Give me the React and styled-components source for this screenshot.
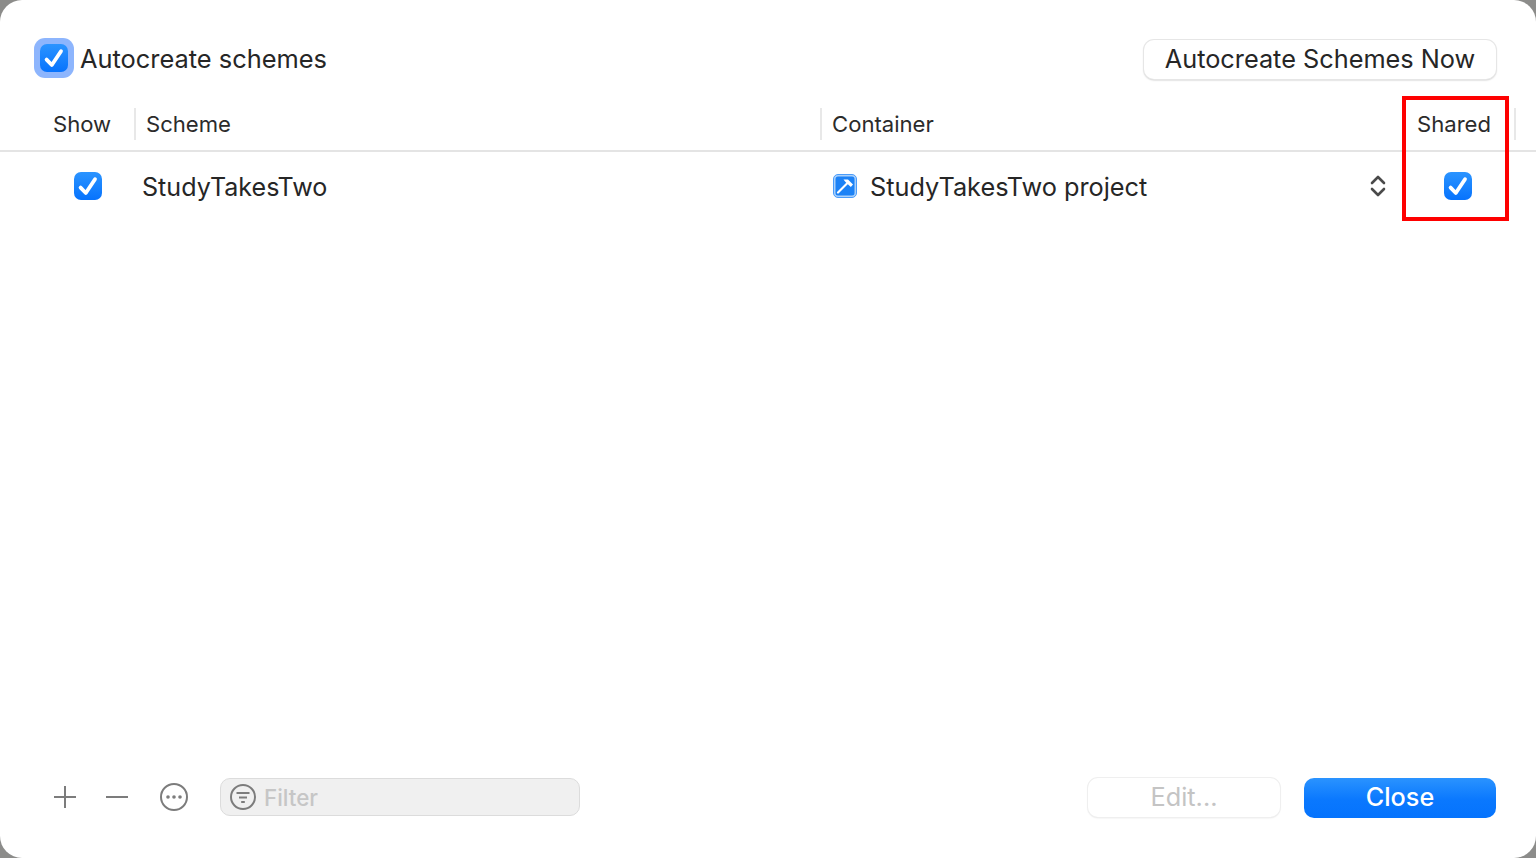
import React from "react";
import styled, { createGlobalStyle } from "styled-components";

const GlobalStyle = createGlobalStyle`
  html, body {
    margin: 0;
    height: 100%;
    background: #8c8c8a;
  }
  body {
    font-family: Inter, "Liberation Sans", sans-serif;
    overflow: hidden;
  }
`;

const Sheet = styled.div`
  position: relative;
  box-sizing: border-box;
  width: 1536px;
  height: 858px;
  display: flex;
  flex-direction: column;
  background: #ffffff;
  border-radius: 22px;
  color: #262626;
`;

const TopBar = styled.div`
  display: flex;
  align-items: flex-start;
  justify-content: space-between;
  height: 42px;
  margin-top: 38px;
  padding: 0 40px 0 34px;
`;

const FocusRing = styled.span`
  display: flex;
  align-items: center;
  justify-content: center;
  width: 40px;
  height: 40px;
  border-radius: 11px;
  background: #8db5fd;
`;

const AutoLabel = styled.label`
  display: flex;
  align-items: center;
  gap: 6px;
  font-size: 25.4px;
`;

const PushButton = styled.button`
  box-sizing: border-box;
  height: 39px;
  width: ${(p) => p.$width}px;
  margin-top: ${(p) => p.$top || 0}px;
  padding: 0 0 3px;
  border: none;
  border-radius: 10px;
  font-family: inherit;
  font-size: 25.3px;
  color: ${(p) => (p.$disabled ? "#c4c4c4" : "#262626")};
  background: #ffffff;
  box-shadow: ${(p) =>
    p.$disabled
      ? "0 0 0 1px #efefef, 0 1px 2px rgba(0,0,0,0.12)"
      : "0 0 0 1px #e6e6e6, 0 1px 2px rgba(0,0,0,0.35)"};
`;

const PrimaryButton = styled.button`
  box-sizing: border-box;
  width: 192px;
  height: 40px;
  padding: 0 0 2px;
  border: none;
  border-radius: 10px;
  font-family: inherit;
  font-size: 25.2px;
  font-weight: 500;
  color: #ffffff;
  background: linear-gradient(180deg, #2a93ff 0%, #0a78fe 55%, #0573fd 100%);
`;

const Columns = styled.div`
  display: grid;
  grid-template-columns: 134px 686px 582px 112px 22px;
  align-items: center;
`;

const HeaderRow = styled(Columns)`
  box-sizing: border-box;
  height: 72px;
  padding-top: 18px;
  border-bottom: 2px solid #e4e4e4;
`;

const HeaderCell = styled.div`
  box-sizing: border-box;
  display: flex;
  align-items: center;
  height: 32px;
  padding-left: ${(p) => p.$pad}px;
  border-left: ${(p) => (p.$first ? "none" : "2px solid #e8e8e8")};
  font-size: 22.1px;
  color: #2b2b2b;
`;

const BodyRow = styled(Columns)`
  height: 68px;
`;

const BodyCell = styled.div`
  display: flex;
  align-items: center;
  padding-left: ${(p) => p.$pad || 0}px;
  padding-top: ${(p) => p.$top || 0}px;
  font-size: ${(p) => p.$size || 25.3}px;
`;

const ContainerName = styled.span`
  margin-left: 12px;
  flex: 1;
`;

const Stepper = styled.svg`
  width: 18px;
  height: 24px;
  margin-right: 15px;
`;

const Spacer = styled.div`
  flex: 1;
`;

const BottomBar = styled.div`
  display: flex;
  align-items: flex-start;
  height: 40px;
  margin-bottom: 40px;
  padding: 0 40px 0 53px;
`;

const ToolIcon = styled.svg`
  width: ${(p) => p.$size}px;
  height: ${(p) => p.$size}px;
  margin-top: ${(p) => p.$top}px;
  margin-right: ${(p) => p.$after}px;
  flex: none;
`;

const FilterField = styled.div`
  box-sizing: border-box;
  display: flex;
  align-items: center;
  width: 360px;
  height: 38px;
  padding-left: 9px;
  gap: 8px;
  background: #f0f0f0;
  border: 1px solid #dcdcdc;
  border-radius: 10px;
  font-size: 22.4px;
  font-weight: 500;
  color: #c6c6c6;
`;

const BottomActions = styled.div`
  display: flex;
  gap: 24px;
`;

const Highlight = styled.div`
  position: absolute;
  box-sizing: border-box;
  left: 1402px;
  top: 96px;
  width: 107px;
  height: 125px;
  border: 4px solid #fe0000;
`;

function CheckBox() {
  return (
    <svg width="28" height="28" viewBox="0 0 28 28">
      <defs>
        <linearGradient id="box" x1="0" y1="0" x2="0" y2="1">
          <stop offset="0" stopColor="#2b94ff" />
          <stop offset="1" stopColor="#0773fd" />
        </linearGradient>
      </defs>
      <rect width="28" height="28" rx="7" fill="url(#box)" />
      <path
        d="M6.6 15.6 L11.8 21 L21 7.2"
        fill="none"
        stroke="#fff"
        strokeWidth="3.8"
        strokeLinecap="round"
        strokeLinejoin="round"
      />
    </svg>
  );
}

function ProjectIcon() {
  return (
    <svg width="25" height="24" viewBox="0 0 25 24">
      <rect x="0.5" y="0.5" width="23" height="23" rx="4.5" fill="#a9d0fb" stroke="#4a9cfa" />
      <rect x="2.5" y="2.5" width="19" height="19" rx="2.5" fill="#1c82f6" />
      <path d="M5 18.5 L14.5 9" stroke="#fff" strokeWidth="2.2" strokeLinecap="round" />
      <path d="M10.5 5.5 H15 L20 10.5 L17.8 13 L12.5 8 Z" fill="#fff" />
    </svg>
  );
}

export default function App() {
  return (
    <>
      <GlobalStyle />
      <Sheet>
        <TopBar>
          <AutoLabel>
            <FocusRing>
              <CheckBox />
            </FocusRing>
            <span>Autocreate schemes</span>
          </AutoLabel>
          <PushButton $width={352} $top={2}>
            Autocreate Schemes Now
          </PushButton>
        </TopBar>

        <HeaderRow>
          <HeaderCell $first $pad={53}>Show</HeaderCell>
          <HeaderCell $pad={10}>Scheme</HeaderCell>
          <HeaderCell $pad={10}>Container</HeaderCell>
          <HeaderCell $pad={13}>Shared</HeaderCell>
          <HeaderCell />
        </HeaderRow>

        <BodyRow>
          <BodyCell $pad={74}>
            <CheckBox />
          </BodyCell>
          <BodyCell $pad={8} $size={25.1} $top={2}>StudyTakesTwo</BodyCell>
          <BodyCell $pad={13}>
            <ProjectIcon />
            <ContainerName>StudyTakesTwo project</ContainerName>
            <Stepper viewBox="0 0 18 24">
              <path
                d="M3 9 L9 3 L15 9 M3 15 L9 21 L15 15"
                fill="none"
                stroke="#4a4a4a"
                strokeWidth="2.6"
                strokeLinecap="round"
                strokeLinejoin="round"
              />
            </Stepper>
          </BodyCell>
          <BodyCell $pad={42}>
            <CheckBox />
          </BodyCell>
        </BodyRow>

        <Spacer />

        <BottomBar>
          <ToolIcon $size={24} $top={7} $after={29} viewBox="0 0 24 24">
            <path d="M12 1 V23 M1 12 H23" stroke="#7c7c7c" strokeWidth="2" fill="none" />
          </ToolIcon>
          <ToolIcon $size={24} $top={7} $after={30} viewBox="0 0 24 24">
            <path d="M0 12 H22" stroke="#7c7c7c" strokeWidth="2" fill="none" />
          </ToolIcon>
          <ToolIcon $size={28} $top={5} $after={32} viewBox="0 0 28 28">
            <circle cx="14" cy="14" r="13" fill="none" stroke="#7c7c7c" strokeWidth="2" />
            <circle cx="8" cy="14" r="1.8" fill="#7c7c7c" />
            <circle cx="14" cy="14" r="1.8" fill="#7c7c7c" />
            <circle cx="20" cy="14" r="1.8" fill="#7c7c7c" />
          </ToolIcon>
          <FilterField>
            <svg width="26" height="26" viewBox="0 0 26 26">
              <circle cx="13" cy="13" r="12" fill="none" stroke="#7c7c7c" strokeWidth="2" />
              <path d="M6.5 9 H19.5 M9 13.5 H17 M11.2 18 H14.8" stroke="#7c7c7c" strokeWidth="2" />
            </svg>
            Filter
          </FilterField>
          <Spacer />
          <BottomActions>
            <PushButton $width={192} $disabled>
              Edit...
            </PushButton>
            <PrimaryButton>Close</PrimaryButton>
          </BottomActions>
        </BottomBar>

        <Highlight />
      </Sheet>
    </>
  );
}
